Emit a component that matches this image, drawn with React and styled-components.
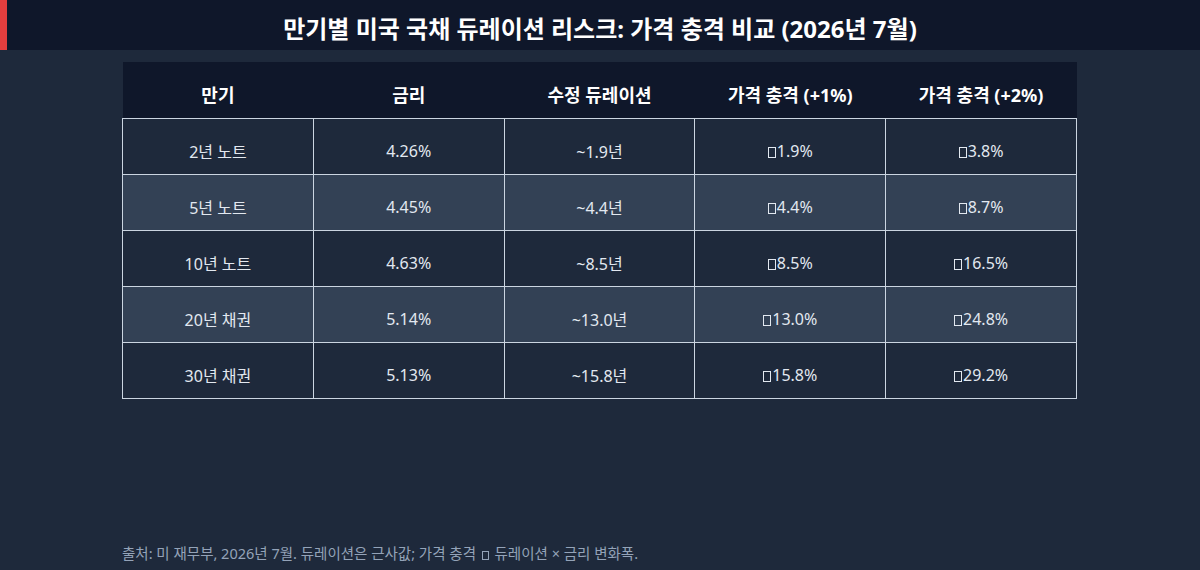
import React from 'react';
import styled, { createGlobalStyle } from 'styled-components';

const GlobalStyle = createGlobalStyle`
  html, body {
    margin: 0;
    padding: 0;
    background: #1e293b;
    font-family: "Noto Sans", "Noto Sans CJK KR", sans-serif;
  }
`;

const Page = styled.div`
  width: 1200px;
  height: 570px;
  background: #1e293b;
  display: flex;
  flex-direction: column;
  overflow: hidden;
`;

const TitleBar = styled.header`
  height: 50px;
  box-sizing: border-box;
  background: #0f172a;
  border-left: 7px solid #e53e3e;
  display: flex;
  align-items: center;
  justify-content: center;
  color: #fff;
  font-size: 24px;
  font-weight: 700;
  padding: 4px 7px 0 0;
`;

const Main = styled.main`
  flex: 1;
  padding: 12px 123px 0 122px;
  display: flex;
  flex-direction: column;
`;

const Table = styled.table`
  width: 955px;
  border-collapse: collapse;
  table-layout: fixed;
  color: #e2e8f0;
  font-size: 16px;
`;

const Th = styled.th`
  height: 56px;
  box-sizing: border-box;
  background: #0f172a;
  color: #fff;
  font-weight: 700;
  font-size: 18px;
  padding: 9px 0 0 0;
  text-align: center;
`;

const Row = styled.tr`
  background: ${p => (p.$alt ? '#334155' : '#1e293b')};
`;

const Td = styled.td`
  height: 56px;
  box-sizing: border-box;
  border: 1px solid #cbd5e1;
  text-align: center;
  padding: 10px 0 0 0;
`;

const Tofu = styled.span`
  display: inline-block;
  width: ${p => (p.$small ? '7px' : '8px')};
  height: ${p => (p.$small ? '9px' : '11px')};
  border: 1px solid currentColor;
  margin: 0 ${p => (p.$small ? '2px' : '1px')} 0 ${p => (p.$small ? '2px' : '0')};
  vertical-align: -1px;
  box-sizing: border-box;
`;

const Footer = styled.footer`
  margin-top: auto;
  padding: 0 0 7px 0;
  color: #94a3b8;
  font-size: 14.5px;
`;

const head = ['만기', '금리', '수정 듀레이션', '가격 충격 (+1%)', '가격 충격 (+2%)'];

const rows = [
  ['2년 노트', '4.26%', '~1.9년', '1.9%', '3.8%'],
  ['5년 노트', '4.45%', '~4.4년', '4.4%', '8.7%'],
  ['10년 노트', '4.63%', '~8.5년', '8.5%', '16.5%'],
  ['20년 채권', '5.14%', '~13.0년', '13.0%', '24.8%'],
  ['30년 채권', '5.13%', '~15.8년', '15.8%', '29.2%'],
];

export default function App() {
  return (
    <Page>
      <GlobalStyle />
      <TitleBar>만기별 미국 국채 듀레이션 리스크: 가격 충격 비교 (2026년 7월)</TitleBar>
      <Main>
        <Table>
          <thead>
            <tr>
              {head.map(h => <Th key={h}>{h}</Th>)}
            </tr>
          </thead>
          <tbody>
            {rows.map((r, i) => (
              <Row key={r[0]} $alt={i % 2 === 1}>
                <Td>{r[0]}</Td>
                <Td>{r[1]}</Td>
                <Td>{r[2]}</Td>
                <Td><Tofu />{r[3]}</Td>
                <Td><Tofu />{r[4]}</Td>
              </Row>
            ))}
          </tbody>
        </Table>
        <Footer>
          출처: 미 재무부, 2026년 7월. 듀레이션은 근사값; 가격 충격 <Tofu $small /> 듀레이션 × 금리 변화폭.
        </Footer>
      </Main>
    </Page>
  );
}
